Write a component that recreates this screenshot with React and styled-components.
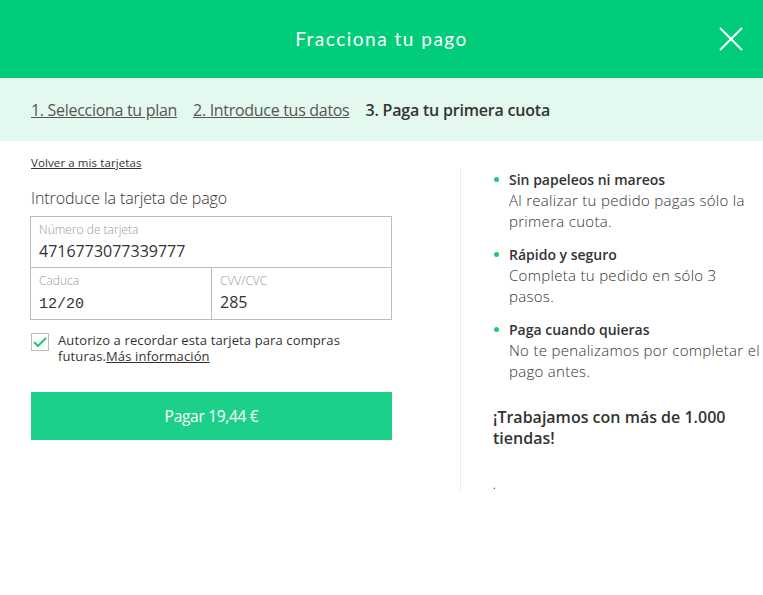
import { Fragment } from "react";
import styled, { createGlobalStyle } from "styled-components";

const GlobalStyle = createGlobalStyle`
  html, body {
    margin: 0;
    padding: 0;
    background: #fff;
    font-family: "Open Sans", "Liberation Sans", sans-serif;
    color: #333;
  }
  * { box-sizing: border-box; }
`;

const benefits = [
  { title: "Sin papeleos ni mareos", text: "Al realizar tu pedido pagas sólo la primera cuota." },
  { title: "Rápido y seguro", text: "Completa tu pedido en sólo 3 pasos." },
  { title: "Paga cuando quieras", text: "No te penalizamos por completar el pago antes." },
];

function App() {
  return (
    <Fragment>
      <GlobalStyle />
      <Header>
        <Title>Fracciona tu pago</Title>
        <Close aria-label="Cerrar">
          <svg width="24" height="24" viewBox="0 0 24 24">
            <path d="M1 1 L23 23 M23 1 L1 23" stroke="#fff" strokeWidth="2" fill="none" />
          </svg>
        </Close>
      </Header>

      <Steps>
        <Step href="#">1. Selecciona tu plan</Step>
        <Step href="#">2. Introduce tus datos</Step>
        <Step as="span" current>3. Paga tu primera cuota</Step>
      </Steps>

      <Body>
        <LeftCol>
          <BackLink href="#">Volver a mis tarjetas</BackLink>
          <FormTitle>Introduce la tarjeta de pago</FormTitle>
          <CardBox>
            <Field wide>
              <Label>Número de tarjeta</Label>
              <Value>4716773077339777</Value>
            </Field>
            <Field>
              <Label>Caduca</Label>
              <Value mono>12/20</Value>
            </Field>
            <Field last>
              <Label>CVV/CVC</Label>
              <Value>285</Value>
            </Field>
          </CardBox>
          <CheckRow>
            <CheckBox>
              <svg width="14" height="12" viewBox="0 0 14 12">
                <path d="M1 6 L5 10 L13 2" stroke="#1dc97f" strokeWidth="2" fill="none" />
              </svg>
            </CheckBox>
            <CheckText>
              Autorizo a recordar esta tarjeta para compras futuras.<MoreLink href="#">Más información</MoreLink>
            </CheckText>
          </CheckRow>
          <PayButton>Pagar 19,44 €</PayButton>
        </LeftCol>

        <RightCol>
          <List>
            {benefits.map((b) => (
              <Item key={b.title}>
                <ItemTitle>{b.title}</ItemTitle>
                <ItemText>{b.text}</ItemText>
              </Item>
            ))}
          </List>
          <Shops>¡Trabajamos con más de 1.000 tiendas!</Shops>
          <Dot>.</Dot>
        </RightCol>
      </Body>
    </Fragment>
  );
}

const Header = styled.header`
  height: 78px;
  background: #00cc7a;
  display: flex;
  align-items: center;
  justify-content: center;
  position: relative;
`;

const Title = styled.h1`
  margin: 0 0 2px;
  font-family: "Lato", sans-serif;
  font-weight: 400;
  font-size: 19px;
  letter-spacing: 1.5px;
  color: #fff;
`;

const Close = styled.button`
  position: absolute;
  right: 20px;
  top: 27px;
  padding: 0;
  border: none;
  background: none;
  cursor: pointer;
  display: flex;
`;

const Steps = styled.nav`
  height: 63px;
  background: #e3f9ef;
  display: flex;
  align-items: center;
  gap: 16px;
  padding: 1px 31px 0;
  font-size: 16px;
`;

const Step = styled.a`
  color: ${(p) => (p.current ? "#333" : "#555")};
  font-weight: ${(p) => (p.current ? 600 : 400)};
  text-decoration: ${(p) => (p.current ? "none" : "underline")};
  letter-spacing: ${(p) => (p.current ? "-0.2px" : "-0.3px")};
`;

const Body = styled.main`
  display: flex;
  padding: 14px 0 0 31px;
`;

const LeftCol = styled.section`
  width: 361px;
  display: flex;
  flex-direction: column;
`;

const BackLink = styled.a`
  font-size: 11.5px;
  color: #333;
  text-decoration: underline;
  line-height: 16px;
  letter-spacing: 0.1px;
`;

const FormTitle = styled.h2`
  margin: 16px 0 0;
  font-size: 16px;
  font-weight: 300;
  color: #333;
  line-height: 22px;
  letter-spacing: -0.1px;
`;

const CardBox = styled.div`
  margin-top: 7px;
  margin-left: -1px;
  width: 362px;
  display: grid;
  grid-template-columns: 181px 1fr;
  border: 1px solid #bdbdbd;
`;

const Field = styled.div`
  grid-column: ${(p) => (p.wide ? "1 / 3" : "auto")};
  height: 51px;
  padding: 5px 8px 0;
  border-bottom: ${(p) => (p.wide ? "1px solid #bdbdbd" : "none")};
  border-right: ${(p) => (!p.wide && !p.last ? "1px solid #bdbdbd" : "none")};
`;

const Label = styled.div`
  font-size: 12px;
  font-weight: 300;
  color: #999;
  line-height: 16px;
`;

const Value = styled.div`
  margin-top: ${(p) => (p.mono ? "5px" : "2px")};
  font-family: ${(p) => (p.mono ? '"Liberation Mono", monospace' : '"Open Sans", sans-serif')};
  font-size: ${(p) => (p.mono ? "15px" : "16px")};
  color: #333;
  line-height: 22px;
`;

const CheckRow = styled.div`
  display: flex;
  align-items: flex-start;
  gap: 9px;
  margin-top: 12px;
`;

const CheckBox = styled.span`
  flex: none;
  width: 18px;
  height: 18px;
  margin-top: 1px;
  border: 1px solid #bdbdbd;
  display: flex;
  align-items: center;
  justify-content: center;
`;

const CheckText = styled.p`
  margin: 0;
  font-size: 13px;
  line-height: 16px;
  letter-spacing: 0.12px;
  color: #333;
`;

const MoreLink = styled.a`
  color: #333;
  text-decoration: underline;
`;

const PayButton = styled.button`
  margin-top: 28px;
  height: 48px;
  width: 361px;
  border: none;
  background: #1dd08a;
  color: #fff;
  font-family: "Open Sans", sans-serif;
  font-size: 15.5px;
  letter-spacing: -0.3px;
  cursor: pointer;
`;

const RightCol = styled.aside`
  margin-left: 68px;
  margin-top: 13px;
  height: 322px;
  border-left: 1px solid #ececec;
  padding: 1px 0 0 32px;
  width: 303px;
  line-height: 21px;
  color: #333;
`;

const List = styled.ul`
  margin: 0;
  padding: 0 0 0 16px;
  list-style: none;
`;

const Item = styled.li`
  position: relative;
  margin-bottom: 12px;
  display: flex;
  flex-direction: column;
  &::before {
    content: "";
    position: absolute;
    left: -15px;
    top: 8px;
    width: 5px;
    height: 5px;
    border-radius: 50%;
    background: #1dc97f;
  }
`;

const ItemTitle = styled.strong`
  font-size: 14px;
  font-weight: 600;
`;

const ItemText = styled.span`
  max-width: 253px;
  font-size: 15px;
  font-weight: 300;
  letter-spacing: 0.3px;
`;

const Shops = styled.p`
  margin: 25px 0 0;
  font-size: 16px;
  font-weight: 600;
`;

const Dot = styled.p`
  margin: 26px 0 0;
  font-size: 10px;
`;

export default App;
